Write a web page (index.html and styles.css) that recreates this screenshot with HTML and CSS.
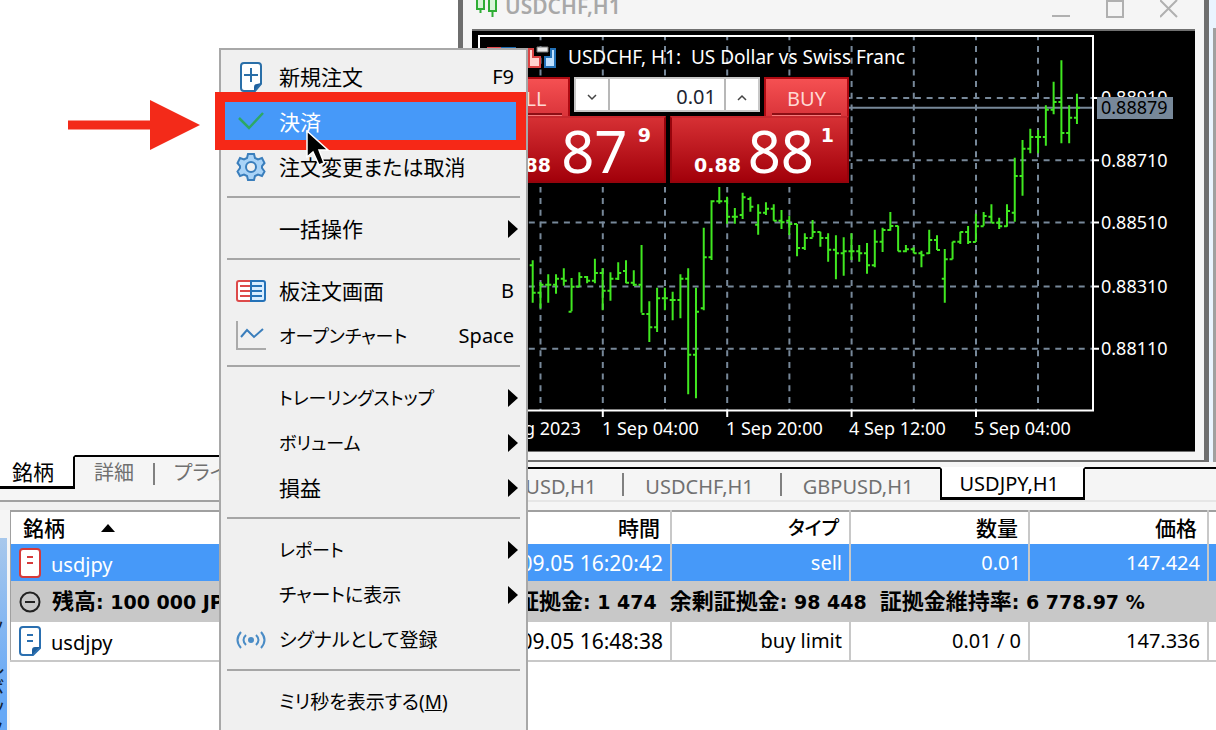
FILE: index.html
```html
<!DOCTYPE html>
<html lang="ja">
<head>
<meta charset="utf-8">
<title>USDCHF,H1</title>
<link rel="stylesheet" href="styles.css">
</head>
<body>
<div class="app">
  <div class="upper">
    <section class="navigator">
      <div class="navigator-body"></div>
      <div class="tabs nav-tabs">
        <button class="tab active">銘柄</button>
        <button class="tab">詳細</button><i class="bar"></i>
        <button class="tab">プライスボード</button>
      </div>
    </section>
    <section class="workspace">
      <div class="desk">
        <div class="window">
          <header class="titlebar">
            <svg class="title-icon" width="24" height="20" viewBox="0 0 24 20" fill="#d8f5d8" stroke="#2fae35" stroke-width="2"><path d="M2-4V9H9V-4ZM5.500 9V13M14-4V11H21V-4ZM17.500 11V17"/></svg>
            <span class="title">USDCHF,H1</span>
            <button class="win-btn" aria-label="最小化"><svg width="18" height="18" viewBox="0 0 18 18"><path d="M0 16H18"/></svg></button>
            <button class="win-btn" aria-label="最大化"><svg width="18" height="18" viewBox="0 0 18 18"><path d="M1 1H17V17H1Z"/></svg></button>
            <button class="win-btn" aria-label="閉じる"><svg width="18" height="18" viewBox="0 0 18 18"><path d="M0 0L17 17M17 0L0 17"/></svg></button>
          </header>
          <div class="chart">
            <svg class="plot" viewBox="472 31 723 420">
              <g class="grid">
                <path d="M480 98H1092M480 160.300H1092M480 222.500H1092M480 286.500H1092M480 348.800H1092" stroke-dashoffset="-2"/>
                <path d="M540.500 36V410M602.800 36V410M665 36V410M727.200 36V410M789.400 36V410M851.600 36V410M913.800 36V410M976 36V410M1038 36V410" stroke-dashoffset="-10"/>
              </g>
              <path class="price-line" d="M480 107.700H1092"/>
              <path id="bars" class="bars"/>
              <path class="frame" d="M479 36H1093V410.500H479ZM1093 98H1099M1093 160.300H1099M1093 222.500H1099M1093 286.500H1099M1093 348.800H1099M602.800 410V417M727.200 410V417M851.600 410V417M976 410V417"/>
              <g class="axis">
                <text class="caption" x="568" y="64" xml:space="preserve">USDCHF, H1:  US Dollar vs Swiss Franc</text>
                <text x="1101" y="104">0.88910</text>
                <text x="1101" y="167">0.88710</text>
                <text x="1101" y="229">0.88510</text>
                <text x="1101" y="293">0.88310</text>
                <text x="1101" y="355">0.88110</text>
                <text x="476" y="435">31 Aug 2023</text>
                <text x="602" y="435">1 Sep 04:00</text>
                <text x="726" y="435">1 Sep 20:00</text>
                <text x="849" y="435">4 Sep 12:00</text>
                <text x="974" y="435">5 Sep 04:00</text>
              </g>
              <rect x="1097" y="97" width="76" height="22" fill="#778899"/>
              <text class="now" x="1101" y="114">0.88879</text>
              <g>
                <path d="M487 47H501V66H487Z" fill="#e5484d"/><path d="M501 47H516V66H501Z" fill="#1c6bb0"/>
                <path d="M529 49H533V57H540V67H529Z" fill="#ffd3cf" stroke="#dc4444" stroke-width="2"/>
                <path d="M555 49H551V57H545V67H555Z" fill="#bfe1ff" stroke="#2472b8" stroke-width="2"/>
                <path d="M537 47H548V52H537Z" fill="#e8e8e8" stroke="#777"/>
              </g>
            </svg>
            <div class="trade">
              <div class="trade-head">
                <button class="side sell"><span>SELL</span></button>
                <div class="volume">
                  <button aria-label="減らす"><svg width="12" height="8" viewBox="0 0 12 8"><path d="M2 1L6 5L10 1"/></svg></button>
                  <input type="text" value="0.01" aria-label="数量">
                  <button aria-label="増やす"><svg width="12" height="8" viewBox="0 0 12 8"><path d="M2 6L6 2L10 6"/></svg></button>
                </div>
                <button class="side buy"><span>BUY</span></button>
              </div>
              <div class="trade-prices">
                <button class="quote"><b>0.88</b><span class="big">87</span><sup>9</sup></button>
                <button class="quote"><b>0.88</b><span class="big">88</span><sup>1</sup></button>
              </div>
            </div>
          </div>
        </div>
        <div class="desk-edge"></div>
      </div>
      <div class="tabs chart-tabs">
        <button class="tab">EURUSD,H1</button><i class="bar"></i>
        <button class="tab">USDCHF,H1</button><i class="bar"></i>
        <button class="tab">GBPUSD,H1</button>
        <button class="tab active">USDJPY,H1</button>
        <span class="fill"></span>
      </div>
    </section>
  </div>

  <section class="toolbox">
    <div class="toolbox-side"><span>ツールボックス</span></div>
    <table class="orders">
      <colgroup><col class="c-symbol"><col><col class="c-num"><col class="c-num"><col class="c-num"><col class="c-end"></colgroup>
      <thead>
        <tr><th class="first">銘柄<svg class="sort" width="14" height="8" viewBox="0 0 14 8"><path d="M0 8L7 0L14 8Z"/></svg></th><th>時間</th><th class="kana">タイプ</th><th>数量</th><th>価格</th><th></th></tr>
      </thead>
      <tbody>
        <tr class="selected">
          <td class="first"><svg class="row-icon" width="22" height="30" viewBox="0 0 22 30"><rect x="1" y="1" width="20" height="28" rx="3" fill="#fff" stroke="#d63a3a" stroke-width="2"/><path d="M8 9H14M8 15H14" stroke="#d63a3a" stroke-width="2"/></svg>usdjpy</td>
          <td class="time">2023.09.05 16:20:42</td><td>sell</td><td>0.01</td><td>147.424</td><td></td>
        </tr>
        <tr class="balance">
          <td colspan="6"><div class="summary">
            <svg width="22" height="22" viewBox="0 0 22 22" fill="none" stroke="#222" stroke-width="2"><circle cx="11" cy="11" r="9.500"/><path d="M6 11H16"/></svg>
            <span class="lead"><span class="jp">残高</span>: 100 000 JPY</span>
            <span><span class="jp">証拠金</span>: 1 474</span>
            <span><span class="jp">余剰証拠金</span>: 98 448</span>
            <span><span class="jp">証拠金維持率</span>: 6 778.97 %</span>
          </div></td>
        </tr>
        <tr class="pending">
          <td class="first"><svg class="row-icon" width="22" height="30" viewBox="0 0 22 30"><path d="M4 1H18Q21 1 21 4V22L14 29H4Q1 29 1 26V4Q1 1 4 1Z" fill="#fff" stroke="#2a6fb0" stroke-width="2"/><path d="M21 21L13 29V24Q13 21 16 21Z" fill="#1d5f9e"/><path d="M8 9H14M8 15H14" stroke="#2a6fb0" stroke-width="2"/></svg>usdjpy</td>
          <td class="time">2023.09.05 16:48:38</td><td>buy limit</td><td>0.01 / 0</td><td>147.336</td><td></td>
        </tr>
      </tbody>
    </table>
  </section>

  <div class="menu" role="menu">
    <button role="menuitem"><svg class="ico" viewBox="0 0 30 30"><path d="M8 1H22Q25 1 25 4V22L19 29H8Q5 29 5 26V4Q5 1 8 1Z" fill="#fff" stroke="#2a6fa8" stroke-width="2"/><path d="M25 21L18 29V25Q18 22 21 22Z" fill="#1d5f9e"/><path d="M15 6V20M8 13H22" stroke="#2a6fa8" stroke-width="2"/></svg><span class="label">新規注文</span><kbd>F9</kbd></button>
    <button role="menuitem" class="current"><svg class="ico" viewBox="0 0 30 30"><path d="M3 11L13 21L27 6" fill="none" stroke="#2da866" stroke-width="2.500"/></svg><span class="label">決済</span></button>
    <button role="menuitem"><svg class="ico" viewBox="0 0 30 30"><path d="M12 2H18L19 6L22 7.500L26 6L28.500 11L26 14V16L28.500 19.500L26 24L22 22.500L19 24L18 28H12L11 24L8 22.500L4 24L1.500 19.500L4 16V14L1.500 11L4 6L8 7.500L11 6Z" fill="#a9d3f7" stroke="#3a7ebc" stroke-width="2"/><circle cx="15" cy="15" r="5" fill="#f0f0f0" stroke="#3a7ebc" stroke-width="2"/></svg><span class="label">注文変更または取消</span></button>
    <hr>
    <button role="menuitem"><i class="ico"></i><span class="label">一括操作</span><i class="sub"></i></button>
    <hr>
    <button role="menuitem"><svg class="ico" viewBox="0 0 30 30"><path d="M15 5H3Q1 5 1 7V23Q1 25 3 25H15" fill="#fff" stroke="#dd4a4a" stroke-width="2"/><path d="M15 5H27Q29 5 29 7V23Q29 25 27 25H15Z" fill="#d8edff" stroke="#2472b8" stroke-width="2"/><path d="M4 10H14M4 15H14M4 20H14" stroke="#dd4a4a" stroke-width="2"/><path d="M16 10H26M16 15H26M16 20H26" stroke="#2472b8" stroke-width="2"/></svg><span class="label">板注文画面</span><kbd>B</kbd></button>
    <button role="menuitem"><svg class="ico" viewBox="0 0 30 30" fill="none" stroke-width="2"><path d="M1 0V28H30" stroke="#aaa"/><path d="M5 16L11 9L18 16L27 8" stroke="#3a7ebc"/></svg><span class="label kana">オープンチャート</span><kbd>Space</kbd></button>
    <hr>
    <button role="menuitem"><i class="ico"></i><span class="label kana">トレーリングストップ</span><i class="sub"></i></button>
    <button role="menuitem"><i class="ico"></i><span class="label kana">ボリューム</span><i class="sub"></i></button>
    <button role="menuitem"><i class="ico"></i><span class="label">損益</span><i class="sub"></i></button>
    <hr>
    <button role="menuitem"><i class="ico"></i><span class="label kana">レポート</span><i class="sub"></i></button>
    <button role="menuitem"><i class="ico"></i><span class="label mixed">チャートに表示</span><i class="sub"></i></button>
    <button role="menuitem"><svg class="ico" viewBox="0 0 30 30" fill="none" stroke="#4a8cc6" stroke-width="2"><path d="M5 7Q-2 15 5 23M10 10Q5 15 10 20M25 7Q32 15 25 23M20 10Q25 15 20 20"/><circle cx="15" cy="15" r="2" fill="#4a8cc6"/></svg><span class="label mixed">シグナルとして登録</span></button>
    <hr>
    <button role="menuitem"><i class="ico"></i><span class="label mixed">ミリ秒を表示する(<u>M</u>)</span></button>
  </div>
  <div class="marker"></div>
  <svg class="pointer-arrow" width="132" height="50" viewBox="0 0 132 50"><path d="M0 20.500H82V0L132 25L82 50V29.500H0Z" fill="#f32a19"/></svg>
  <svg class="cursor" width="30" height="40" viewBox="0 0 30 40"><path d="M2 1V27L8 22L14 35L19 33L14 20H23Z" fill="#000" stroke="#fff" stroke-width="1.500"/></svg>
</div>
<script src="chart.js"></script>
</body>
</html>
```
FILE: styles.css
```css
* { box-sizing: border-box; }
body { margin: 0; background: #fff; color: #000; font: 20px/24px "Noto Sans", "Noto Sans CJK JP", sans-serif; }
button, input { font: inherit; color: inherit; border: 0; padding: 0; background: none; border-radius: 0; }
.app { position: relative; display: flex; flex-direction: column; height: 100vh; overflow: hidden; background: #f5f5f5; }

.upper { display: flex; flex: none; }
.navigator { display: flex; flex-direction: column; flex: 0 0 458px; border-bottom: 8px solid #f0f0f0; }
.navigator-body { flex: 1; background: #fff; }
.workspace { flex: 1; min-width: 0; display: flex; flex-direction: column; padding-bottom: 8px; }

.tabs { display: flex; align-items: stretch; color: #707070; }
.tab { white-space: nowrap; }
.bar { flex: none; width: 2px; border-top: 2px solid #000; background: #808080 content-box; }
.tab.active { background: #fff; color: #000; border: solid #000; border-width: 0 2px 3px; }
.nav-tabs { height: 47px; padding-bottom: 11px; background: #f5f5f5; border-bottom: 2px solid #a0a0a0; overflow: hidden; }
.nav-tabs .tab { border-top: 2px solid #000; padding: 0 19px; font-feature-settings: "palt"; }
.nav-tabs .tab.active { border-left: 0; border-top-color: #fff; padding: 0 19px 0 12px; font-size: 21px; }
.nav-tabs .bar { padding: 6px 0 4px; }

.desk { display: flex; border-bottom: 5px solid #f5f5f5; }
.desk-edge { flex: none; width: 7px; background: #a0a0a0; border-left: 4px solid #eaf4ff; border-top: 28px solid #eaf4ff; }
.window { flex: 1; min-width: 0; background: #f5f5f5; border: solid #6e6e6e; border-width: 0 5px 2px; }
.titlebar { display: flex; height: 29px; overflow: hidden; color: #a8a8a8; line-height: 12px; padding: 0 26px 0 12px; }
.title { flex: 1; margin-left: 6px; font-weight: 600; font-size: 21px; }
.win-btn { width: 18px; height: 18px; margin-left: 36px; }
.win-btn svg { display: block; fill: none; stroke: #b0b0b0; stroke-width: 2; }
.chart { position: relative; margin: 0 9px 8px; border: solid #707070; border-width: 2px 0 1px; background: #000; }
.plot { display: block; width: 100%; }
.grid { fill: none; stroke: #778899; stroke-width: 2; stroke-dasharray: 6 5.700; }
.price-line { stroke: #778899; stroke-width: 2; }
.frame { fill: none; stroke: #fff; stroke-width: 2; }
.bars { fill: none; stroke: #40e820; stroke-width: 2; }
.axis { fill: #fff; font-size: 18px; }
.caption { font-size: 19px; }
.now { fill: #000; font-size: 18px; }

.trade { position: absolute; left: 8px; top: 46px; width: 369px; background: #000; color: #fff; padding-bottom: 4px; }
.trade-head { display: flex; height: 39px; gap: 4px; }
.side { background: linear-gradient(#f55052, #da343a); border: solid #b00a12; border-width: 2px 2px 0; color: #ffd9d4; padding: 0 6px; }
.side span { display: block; height: 34px; border-bottom: 2px solid #8c0e14; box-shadow: 0 1px #f57a7a; line-height: 36px; }
.sell { width: 90px; }
.buy { width: 85px; }
.volume { flex: 1; min-width: 0; display: flex; height: 35px; background: #fff; border: 2px solid #c8c8c8; color: #1c2430; }
.volume button { width: 32px; }
.volume svg { fill: none; stroke: #444; stroke-width: 1.500; }
.volume input { flex: 1; min-width: 0; text-align: right; padding: 4px 8px 0; border: solid #b8b8b8; border-width: 0 2px; }
.trade-prices { display: grid; grid-template-columns: 186px 179px; gap: 4px; }
.quote { display: flex; align-items: flex-end; height: 67px; padding: 0 13px 5px 22px; color: #fff; background: linear-gradient(#d63034, #a2000a); border: 2px solid #96040c; border-top-color: #c8282e; }
.quote b, .quote sup { font: bold 19px/22px "DejaVu Sans", sans-serif; }
.quote .big { flex: 1; text-align: center; font-size: 58px; line-height: 50px; }
.quote sup { align-self: flex-start; margin-top: 6px; }

.chart-tabs { height: 35px; justify-content: flex-end; border-bottom: 2px solid #e6e6e6; }
.chart-tabs .tab, .chart-tabs .fill { border-top: 2px solid #000; }
.chart-tabs .tab { padding: 4px 26px 0 21px; }
.chart-tabs .tab.active { border-top-color: #fff; padding: 2px 24px 0 18px; }
.chart-tabs .bar { padding: 4px 0; }
.chart-tabs .fill { width: 131px; }

.toolbox { display: flex; flex: 1; min-height: 0; align-items: stretch; }
.toolbox-side { flex: 0 0 7px; margin: 28px 3px 0 0; overflow: hidden; background: linear-gradient(#a8c8ec, #66a8f6 160px); position: relative; color: #123; }
.toolbox-side span { position: absolute; right: 2px; top: 80px; writing-mode: vertical-rl; white-space: nowrap; }
.orders { flex: 1; align-self: flex-start; min-height: 0; table-layout: fixed; width: 100%; border-collapse: collapse; border-top: 2px solid #a0a0a0; border-left: 1px solid #a0a0a0; background: #fff; box-shadow: 0 100px #fff; }
.c-symbol { width: 300px; }
.c-num { width: 179px; }
.c-end { width: 8px; }
.orders th, .orders td { padding: 0 7px; text-align: right; border-right: 2px solid #c8c8c8; white-space: nowrap; overflow: hidden; }
.orders tr > :last-child { border-right: 0; padding: 0; }
.orders th { height: 33px; font-weight: 500; padding-right: 10px; font-size: 21px; }
.orders th.kana { font-size: 19px; font-feature-settings: "palt"; }
.orders .first { text-align: left; padding-left: 8px; }
.orders th.first { padding-left: 12px; }
.orders .time { font-size: 21px; }
.sort { margin-left: 36px; vertical-align: 4px; }
.row-icon { margin-right: 10px; vertical-align: -6px; }
.selected td { height: 37px; background: #4699f9; color: #fff; }
.pending td { height: 39px; border-bottom: 2px solid #c8c8c8; }
.orders .balance td { height: 41px; background: #c8c8c8; padding: 0 8px; }
.summary { display: flex; align-items: center; gap: 13px; text-align: left; font: bold 19px/28px "DejaVu Sans", "Noto Sans CJK JP", sans-serif; }
.summary .jp { font-size: 22px; }
.summary .lead { flex: 0 0 450px; margin-left: -2px; margin-right: 2px; }

.menu { position: absolute; left: 219px; top: 48px; width: 309px; padding: 4px 6px 12px; background: #f0f0f0; border: 2px solid #a8a8a8; }
.menu button { display: flex; align-items: center; width: 100%; height: 45px; padding: 0 6px 0 9px; text-align: left; }
.menu hr { margin: 7px 0 8px; border: 0; height: 2px; background: #a6a6a6; }
.ico { flex: none; width: 30px; height: 30px; margin-right: 13px; }
.label { flex: 1; font-size: 21px; font-feature-settings: "palt"; white-space: nowrap; }
.label.kana { font-size: 18px; }
.label.mixed { font-size: 19px; }
.menu kbd { font: inherit; }
.menu .current { background: #4699f9; color: #fff; box-shadow: -2px 0 #4699f9; }
.sub { border: solid transparent; border-width: 9px 0 9px 10px; border-left-color: #000; margin-right: -4px; }

.marker { position: absolute; left: 215px; top: 92px; width: 311px; height: 58px; border: 10px solid #f62817; }
.pointer-arrow { position: absolute; left: 68px; top: 100px; }
.cursor { position: absolute; left: 305px; top: 130px; }
```
FILE: chart.js
```js
// Hourly bars: [high, low, open, close] as offsets in thirds of a unit below y = 180.
const bars = [
  [241,368,256,338],[306,385,338,314],[283,368,314,314],[283,341,314,296],[265,317,296,302],
  [294,394,395,320],[277,320,320,291],[288,310,291,302],[236,310,302,279],[265,391,279,332],
  [277,362,332,296],[247,300,296,279],[241,310,273,308],[271,318,308,314],[195,398,314,402],
  [364,486,402,442],[323,456,442,355],[323,391,355,355],[335,421,360,360],[283,415,360,296],
  [265,643,296,524],[323,655,524,395],[143,391,385,232],[61,240,232,64],[20,71,64,64],
  [50,131,64,110],[84,131,110,110],[38,117,105,52],[50,95,57,80],[73,164,134,98],
  [67,105,98,86],[73,122,86,122],[90,147,122,127],[108,165,122,132],[132,229,132,204],
  [160,210,204,174],[120,172,174,156],[155,200,156,174],[160,245,174,209],[166,298,209,220],
  [172,287,220,214],[160,240,214,214],[195,245,214,220],[189,281,220,256],[149,262,256,185],
  [143,216,185,150],[96,152,150,138],[137,214,138,214],[195,217,214,208],[202,220,208,220],
  [212,262,220,226],[149,222,220,180],[166,210,180,210],[207,368,296,238],[185,238,238,185],
  [155,192,185,156],[138,192,156,186],[101,186,186,139],[96,137,139,108],[73,128,110,128],
  [113,147,128,139],[73,140,139,93],[-67,125,98,-12],[-120,47,-12,-94],[-154,-80,-94,-129],
  [-150,-80,-129,-129],[-224,-103,-129,-211],[-295,-197,-211,-234],[-359,-110,-234,-141],
  [-224,-110,-141,-187],[-259,-168,-187,-217]
];
const y = v => (180 + v / 3).toFixed(1);
document.getElementById("bars").setAttribute("d", bars.map((b, i) => {
  const x = 532.7 + i * 7.775;
  return `M${x} ${y(b[0])}V${y(b[1])}M${x - 3} ${y(b[2])}H${x}M${x} ${y(b[3])}H${x + 3}`;
}).join(""));
```
